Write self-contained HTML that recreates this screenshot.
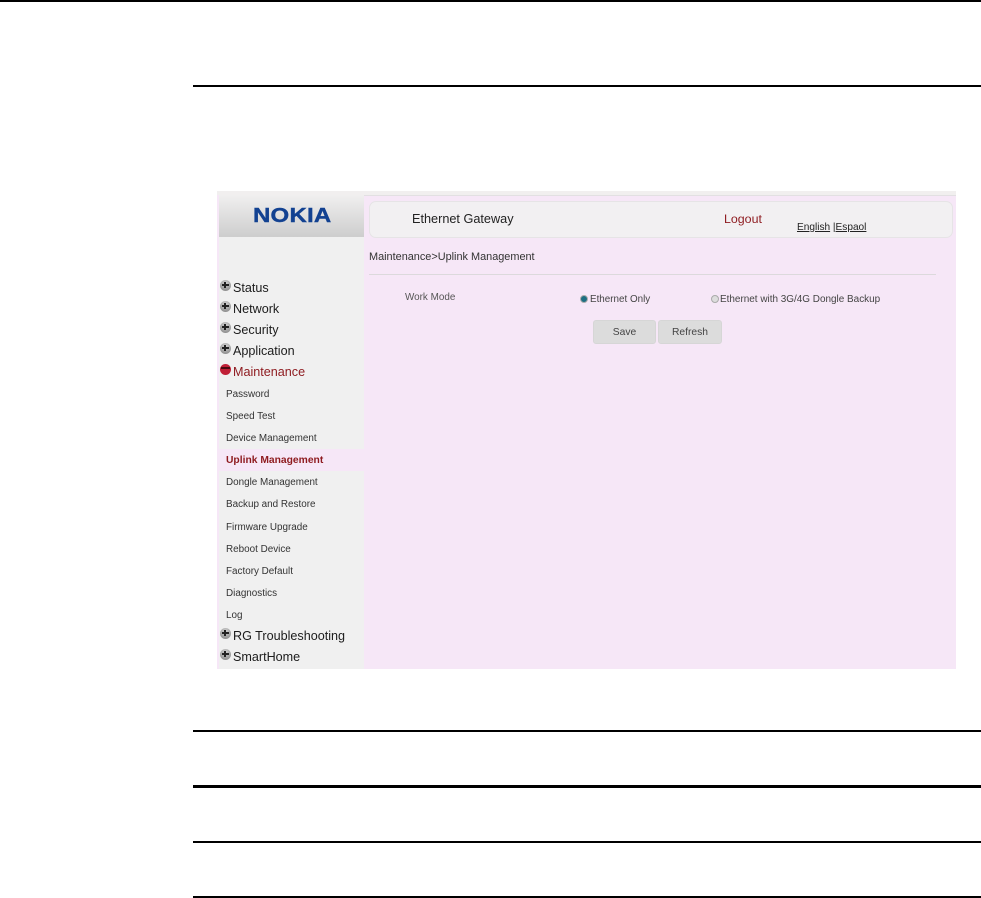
<!DOCTYPE html>
<html lang="en">
<head>
<meta charset="utf-8">
<title>Uplink Management</title>
<style>
html,body{margin:0;padding:0;background:#fff;}
body{position:relative;width:981px;height:898px;overflow:hidden;font-family:"Liberation Sans",Arial,sans-serif;}
.abs,.l,.m,.s,.i{position:absolute;}
.l{background:#000;}
.shot{position:absolute;left:0;top:0;width:981px;height:898px;filter:blur(.3px);}
.m{left:233px;font-size:12.6px;line-height:14px;color:#1c1c1c;white-space:nowrap;}
.s{left:226px;font-size:9.9px;line-height:12px;color:#333;white-space:nowrap;}
.i{left:220px;width:11px;height:11px;border-radius:50%;background:radial-gradient(circle at 50% 30%,#d4d4d4,#8a8a8a 85%);}
.i:before{content:"";position:absolute;left:2px;top:4px;width:7px;height:2px;background:#222;}
.i:after{content:"";position:absolute;left:4px;top:2px;width:2px;height:6px;background:#222;}
.t{position:absolute;white-space:nowrap;}
.b{position:absolute;top:320px;height:24px;background:#dcdcdc;border:1px solid #d6d6d6;border-radius:3px;box-sizing:border-box;font-size:10.3px;line-height:23px;text-align:center;color:#444;}
</style>
</head>
<body>
<div class="l" style="left:0;top:0;width:981px;height:2px"></div>
<div class="l" style="left:193px;top:85px;width:788px;height:2px"></div>
<div class="l" style="left:193px;top:730px;width:788px;height:2px"></div>
<div class="l" style="left:193px;top:785px;width:788px;height:3px"></div>
<div class="l" style="left:193px;top:841px;width:788px;height:2px"></div>
<div class="l" style="left:193px;top:896px;width:788px;height:2px"></div>

<div class="shot">
<div class="abs" style="left:217px;top:191px;width:739px;height:478px;background:#f6e7f7"></div>
<div class="abs" style="left:217px;top:191px;width:739px;height:4px;background:#f1efef"></div>
<div class="abs" style="left:364px;top:195px;width:592px;height:1px;background:#e2e0e2"></div>
<div class="abs" style="left:219px;top:237px;width:145px;height:432px;background:#f0f0f0"></div>
<div class="abs" style="left:219px;top:195px;width:145px;height:42px;background:linear-gradient(#f0efef,#cdcdcd)"></div>
<div class="t" style="left:253px;top:204px;font-size:20.5px;line-height:24px;font-weight:bold;color:#124191;letter-spacing:.2px;-webkit-text-stroke:.4px #124191;transform:scaleX(1.17);transform-origin:0 0">NOKIA</div>
<div class="abs" style="left:369px;top:201px;width:584px;height:37px;box-sizing:border-box;background:#f2f0f2;border:1px solid #e6e4e6;border-radius:7px"></div>

<div class="t" style="left:412px;top:212px;font-size:12.7px;line-height:15px;color:#222">Ethernet Gateway</div>
<div class="t" style="left:724px;top:212px;font-size:12.4px;line-height:15px;color:#8e1a1f">Logout</div>
<div class="t" style="left:797px;top:222px;font-size:10.1px;line-height:12px;color:#222"><span style="text-decoration:underline">English</span> |<span style="text-decoration:underline">Espaol</span></div>
<div class="t" style="left:369px;top:251px;font-size:10.9px;line-height:13px;color:#333">Maintenance&gt;Uplink Management</div>
<div class="abs" style="left:369px;top:274px;width:567px;height:1px;background:#dcd9dc"></div>

<div class="t" style="left:405px;top:292px;font-size:9.9px;line-height:12px;color:#555">Work Mode</div>
<div class="abs" style="left:580px;top:295px;width:8px;height:8px;border-radius:50%;background:#1d6f82;border:1px solid #aaa;box-sizing:border-box"></div>
<div class="t" style="left:590px;top:294px;font-size:9.85px;line-height:12px;color:#444">Ethernet Only</div>
<div class="abs" style="left:711px;top:295px;width:8px;height:8px;border-radius:50%;background:#ddd;border:1px solid #aaa;box-sizing:border-box"></div>
<div class="t" style="left:720px;top:294px;font-size:9.95px;line-height:12px;color:#444">Ethernet with 3G/4G Dongle Backup</div>
<div class="b" style="left:593px;width:63px">Save</div>
<div class="b" style="left:658px;width:64px">Refresh</div>

<div class="i" style="top:280px"></div><div class="m" style="top:281px">Status</div>
<div class="i" style="top:301px"></div><div class="m" style="top:302px">Network</div>
<div class="i" style="top:322px"></div><div class="m" style="top:323px">Security</div>
<div class="i" style="top:343px"></div><div class="m" style="top:344px">Application</div>
<div class="abs" style="left:220px;top:364px;width:11px;height:11px;border-radius:50%;background:#c01f36"></div>
<div class="abs" style="left:221px;top:367px;width:9px;height:2px;background:#4a0a10"></div>
<div class="m" style="top:365px;color:#8e1a1f">Maintenance</div>

<div class="s" style="top:389px">Password</div>
<div class="s" style="top:411px">Speed Test</div>
<div class="s" style="top:433px">Device Management</div>
<div class="abs" style="left:219px;top:449px;width:145px;height:22px;background:#f6e7f7"></div>
<div class="s" style="top:455px;font-weight:bold;color:#8e1a1f;font-size:10.3px">Uplink Management</div>
<div class="s" style="top:477px">Dongle Management</div>
<div class="s" style="top:499px">Backup and Restore</div>
<div class="s" style="top:522px">Firmware Upgrade</div>
<div class="s" style="top:544px">Reboot Device</div>
<div class="s" style="top:566px">Factory Default</div>
<div class="s" style="top:588px">Diagnostics</div>
<div class="s" style="top:610px">Log</div>
<div class="i" style="top:628px"></div><div class="m" style="top:629px">RG Troubleshooting</div>
<div class="i" style="top:649px"></div><div class="m" style="top:650px">SmartHome</div>
</div>
</body>
</html>
